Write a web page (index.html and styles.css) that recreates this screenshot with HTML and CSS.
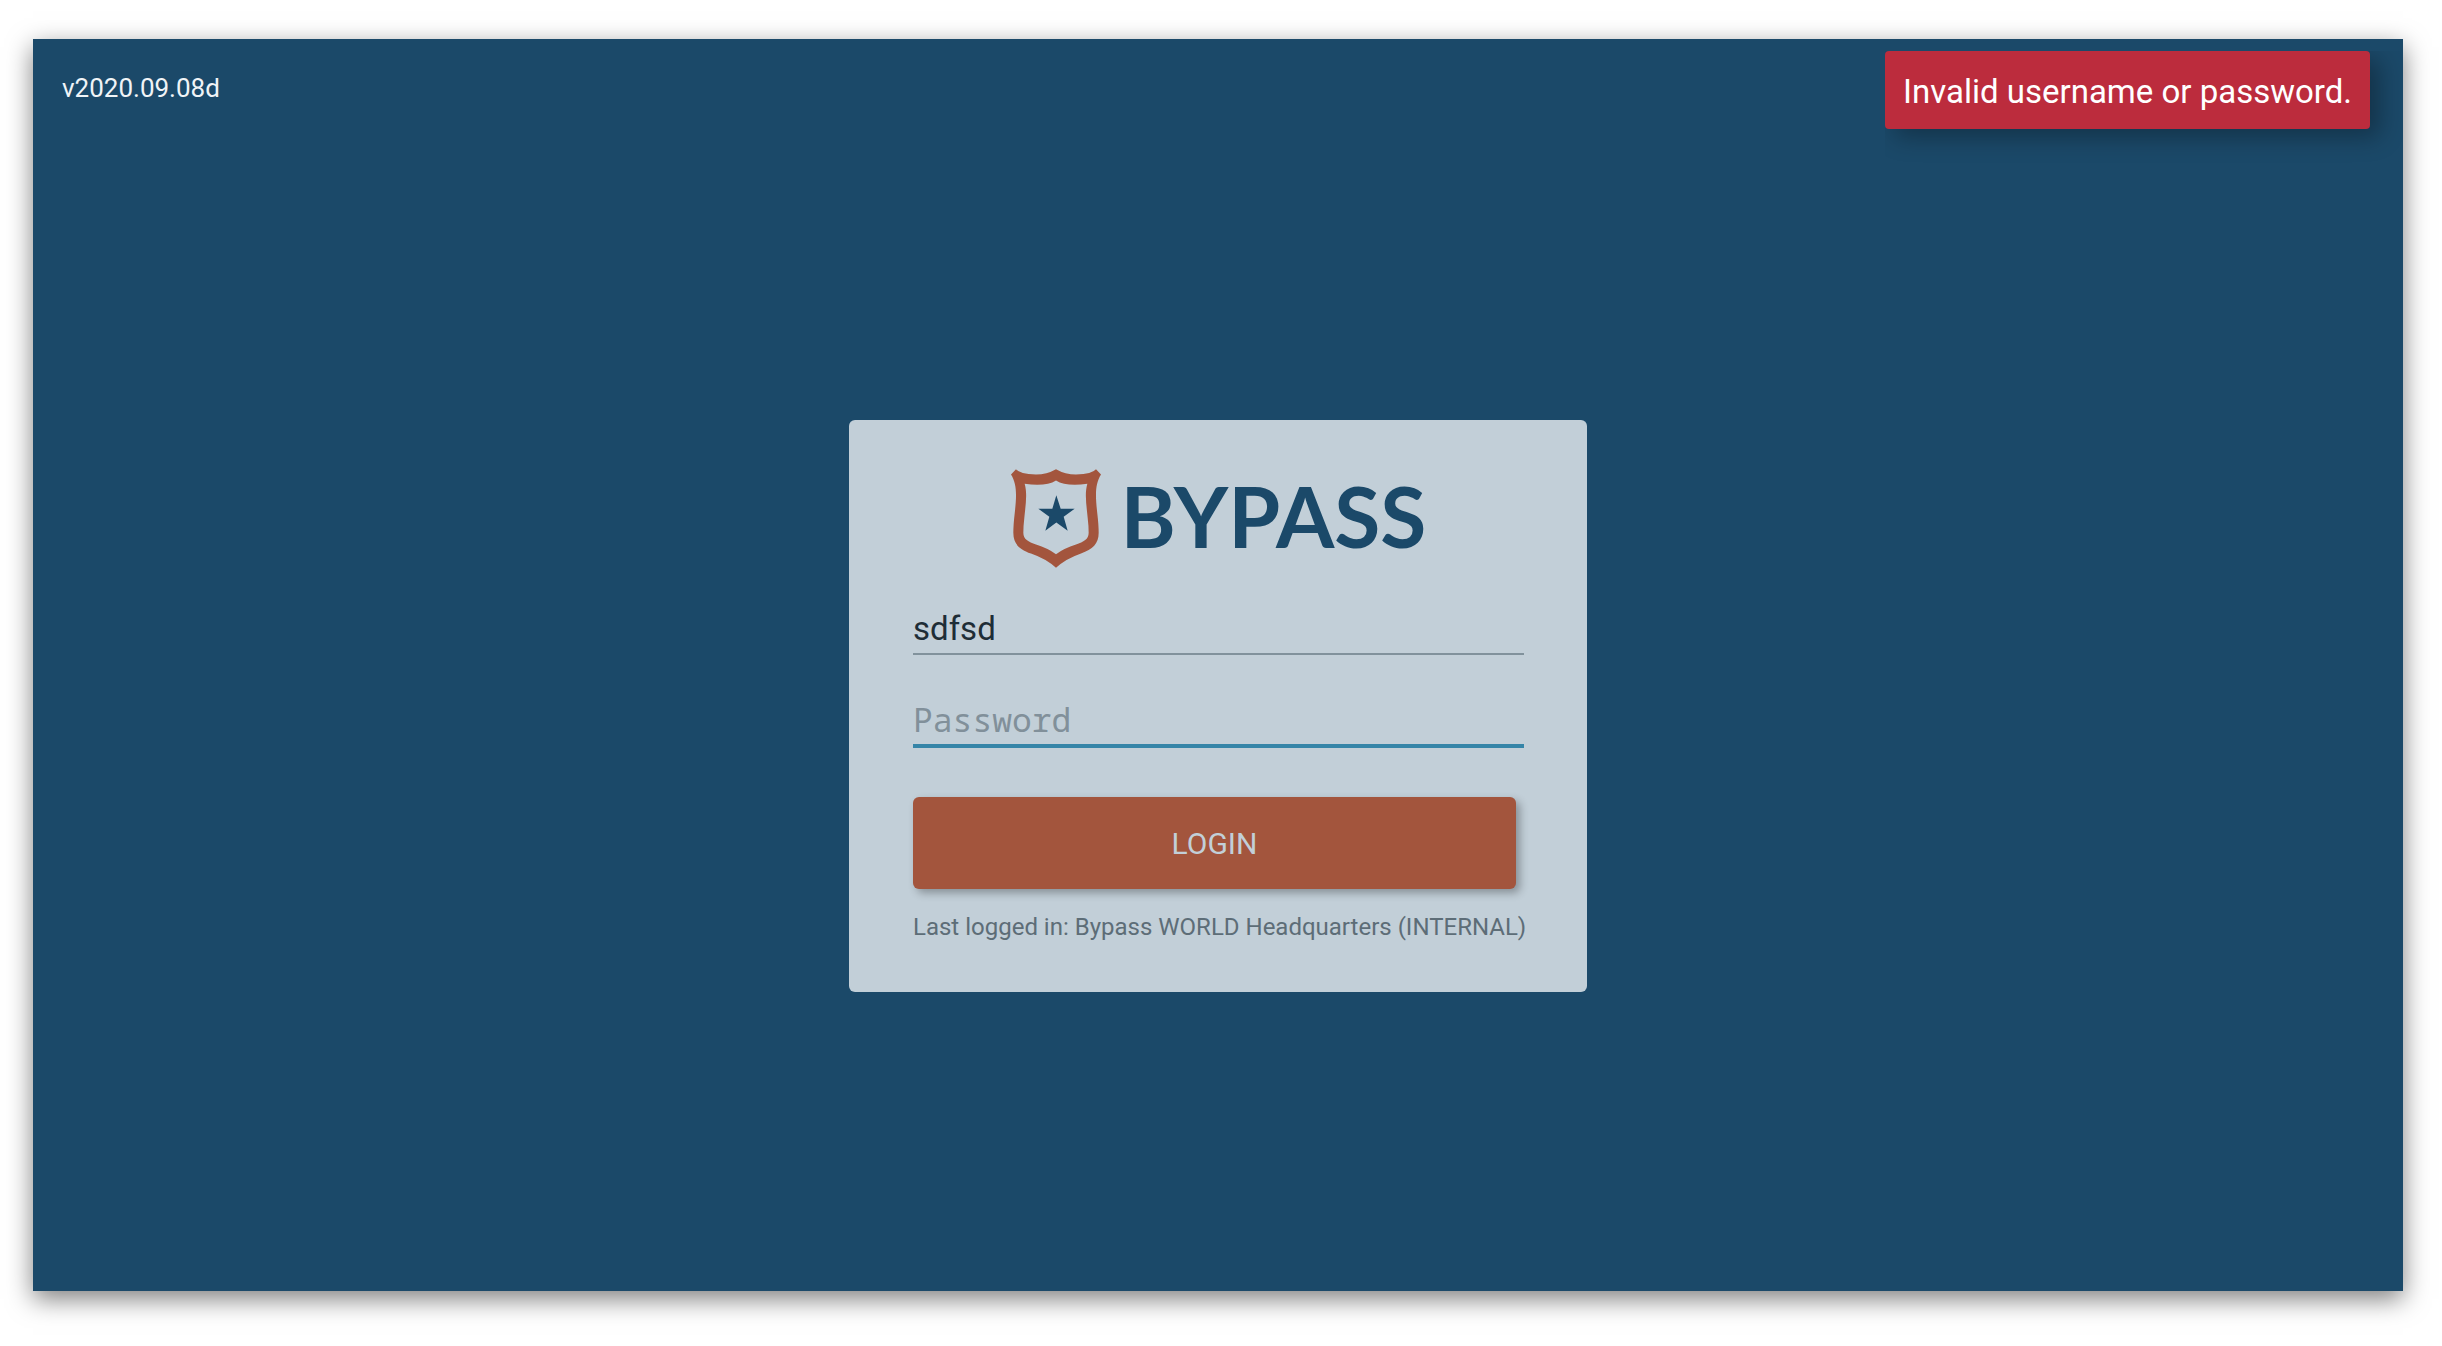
FILE: index.html
```
<!DOCTYPE html>
<html lang="en">
<head>
    <meta charset="UTF-8">
    <meta name="viewport" content="width=device-width, initial-scale=1.0">
    <title>Bypass - Login</title>
    <link rel="stylesheet" href="styles.css">
</head>
<body>
    <div class="window">
        <header class="top-bar">
            <span class="version">v2020.09.08d</span>
        </header>

        <div class="toast" role="alert">Invalid username or password.</div>

        <main class="content">
            <form class="login-card">
                <h1 class="logo">
                    <svg class="shield" viewBox="40 44 270 296" aria-hidden="true">
                        <path class="shield-outline" fill-rule="evenodd" d="M40 60 L55 44 Q66 58 115 60 Q147 60 175 44 Q203 60 235 60 Q284 58 295 44 L310 60 C290 92 294 130 299 178 Q303 212 303 235 C303 268 285 285 250 297 Q204 313 175 340 Q146 313 100 297 C65 285 47 268 47 235 Q47 212 51 178 C56 130 60 92 40 60 Z M81 88 Q145 97 175 78 Q205 97 269 88 C260 120 267 155 270 190 Q273 215 273 235 C273 255 258 262 235 270 Q200 281 175 299 Q150 281 115 270 C92 262 77 255 77 235 Q77 215 80 190 C83 155 90 120 81 88 Z"/>
                        <path class="shield-star" d="M176 122 L189 163 L231 163 L198 187 L210 229 L176 204 L143 229 L155 187 L122 163 L164 163 Z"/>
                    </svg>
                    <span>BYPASS</span>
                </h1>

                <input class="field" type="text" name="username" value="sdfsd" aria-label="Username">
                <input class="field field-active" type="password" name="password" placeholder="Password" aria-label="Password">

                <button class="login-button" type="button">LOGIN</button>
                <p class="last-login">Last logged in: Bypass WORLD Headquarters (INTERNAL)</p>
            </form>
        </main>
    </div>
</body>
</html>
```
FILE: styles.css
```
* {
    box-sizing: border-box;
}
body {
    display: flex;
    min-height: 100vh;
    margin: 0;
    padding: 39px 39px 55px 33px;
    background-color: #fff;
    font-family: Roboto, sans-serif;
}
.window {
    position: relative;
    display: flex;
    flex: 1;
    flex-direction: column;
    overflow: hidden;
    background-color: #1b4969;
    box-shadow: 0 8px 24px rgba(0, 0, 0, 0.5);
}
.top-bar {
    height: 82px;
    padding: 32px 29px 0;
}
.version {
    color: #f0f4f7;
    font-size: 26px;
    line-height: 34px;
}
.toast {
    position: absolute;
    top: 12px;
    right: 33px;
    padding: 21px 18px 17px;
    border-radius: 4px;
    background-color: #bc2c3d;
    box-shadow: 10px 8px 24px rgba(0, 0, 0, 0.3);
    clip-path: inset(0 -40px -40px 0);
    color: #fff;
    font-size: 33px;
    line-height: 40px;
}
.content {
    display: flex;
    flex: 1;
    align-items: center;
    justify-content: center;
}
.login-card {
    display: flex;
    flex-direction: column;
    width: 738px;
    max-width: 100%;
    padding: 49px 63px 49px 64px;
    border-radius: 6px;
    background-color: #c2cfd8;
}
.logo {
    display: flex;
    align-items: flex-start;
    justify-content: center;
    gap: 20px;
    margin: 0;
    color: #1b4969;
    font-family: Lato, sans-serif;
    font-size: 84px;
    font-weight: 700;
    line-height: 94px;
}
.shield {
    width: 90px;
    height: 99px;
}
.shield-outline {
    fill: #a3553d;
}
.shield-star {
    fill: #1b4969;
}
.field {
    height: 60px;
    margin-top: 27px;
    padding: 12px 0 4px;
    border: 0;
    border-bottom: 2px solid #81929c;
    outline: none;
    background: none;
    color: #1e2d36;
    font-family: Roboto, sans-serif;
    font-size: 33px;
}
.field-active {
    height: 62px;
    margin-top: 31px;
    border-bottom: 4px solid #3585a8;
    font-family: "Noto Sans Mono", "DejaVu Sans Mono", monospace;
}
.field::placeholder {
    color: #81909a;
    opacity: 1;
}
.login-button {
    height: 92px;
    margin: 49px 8px 0 0;
    border: 0;
    border-radius: 6px;
    background-color: #a3553d;
    box-shadow: 4px 4px 8px rgba(0, 0, 0, 0.3);
    color: #c2cfd8;
    font-family: Roboto, sans-serif;
    font-size: 30px;
    cursor: pointer;
}
.last-login {
    margin: 22px 0 0;
    color: #5d6d77;
    font-size: 24px;
    line-height: 32px;
    white-space: nowrap;
}
```
